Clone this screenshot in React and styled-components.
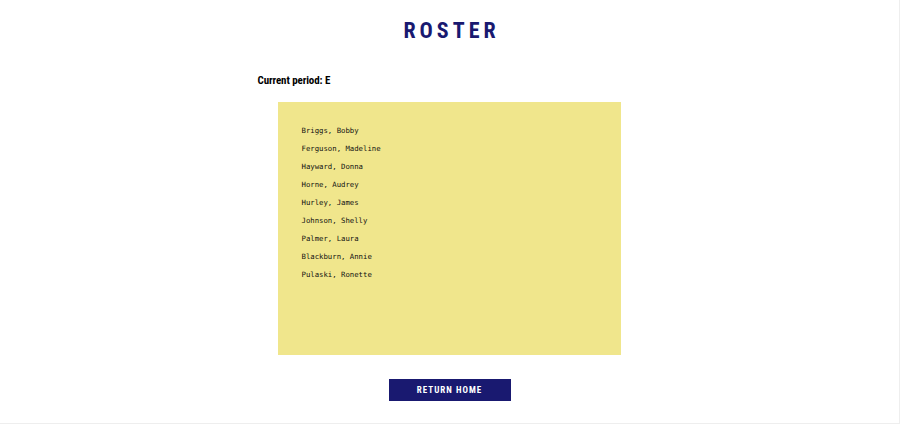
import React from 'react';
import styled, { createGlobalStyle } from 'styled-components';

const GlobalStyle = createGlobalStyle`
  html, body {
    margin: 0;
    padding: 0;
    background: #ffffff;
  }
`;

const condensed = `"Roboto Condensed", "Liberation Sans Narrow", "DejaVu Sans Condensed", sans-serif`;

const Page = styled.div`
  width: 899px;
  height: 423px;
  border-right: 1px solid #eeeeee;
  border-bottom: 1px solid #eeeeee;
  display: flex;
  flex-direction: column;
  align-items: center;
  box-sizing: content-box;
`;

const Title = styled.h1`
  margin: 16px 0 0;
  font-family: ${condensed};
  font-weight: 700;
  font-size: 22px;
  letter-spacing: 4px;
  padding-left: 4px;
  color: #191970;
  line-height: 30px;
`;

const Section = styled.div`
  width: 384px;
  margin-top: 27px;
  display: flex;
  flex-direction: column;
`;

const Period = styled.h2`
  margin: 0;
  font-family: ${condensed};
  font-weight: 700;
  font-size: 11px;
  letter-spacing: -0.1px;
  line-height: 16px;
  color: #000000;
`;

const Box = styled.ul`
  list-style: none;
  margin: 13px 0 0 20px;
  width: 343px;
  height: 253px;
  box-sizing: border-box;
  padding: 20px 0 0 24px;
  background: #f0e68c;
`;

const Student = styled.li`
  font-family: "DejaVu Sans Mono", "Liberation Mono", monospace;
  font-size: 7.3px;
  line-height: 18px;
  color: #111111;
`;

const Button = styled.button`
  margin-top: 24px;
  width: 122px;
  height: 22px;
  border: none;
  background: #191970;
  color: #ffffff;
  font-family: ${condensed};
  font-weight: 700;
  font-size: 9px;
  letter-spacing: 1px;
  cursor: pointer;
`;

const students = [
  'Briggs, Bobby',
  'Ferguson, Madeline',
  'Hayward, Donna',
  'Horne, Audrey',
  'Hurley, James',
  'Johnson, Shelly',
  'Palmer, Laura',
  'Blackburn, Annie',
  'Pulaski, Ronette',
];

export default function App() {
  return (
    <>
      <GlobalStyle />
      <Page>
        <Title>ROSTER</Title>
        <Section>
          <Period>Current period: E</Period>
          <Box>
            {students.map((s) => (
              <Student key={s}>{s}</Student>
            ))}
          </Box>
        </Section>
        <Button>RETURN HOME</Button>
      </Page>
    </>
  );
}
